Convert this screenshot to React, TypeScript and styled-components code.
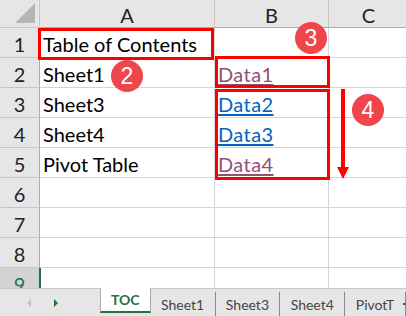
import React from "react"
import styled, { createGlobalStyle } from "styled-components"

const GlobalStyle = createGlobalStyle`
  html, body {
    margin: 0;
    padding: 0;
    background: #ffffff;
    overflow: hidden;
  }
`

const Window = styled.div`
  width: 406px;
  height: 316px;
  display: flex;
  flex-direction: column;
  font-family: Lato, "Liberation Sans", sans-serif;
  overflow: hidden;
`

const SheetArea = styled.div`
  position: relative;
  height: 288px;
  overflow: hidden;
`

const Grid = styled.div`
  display: grid;
  grid-template-columns: 40px 175px 114px 80px;
  grid-template-rows: 28px repeat(9, 30px);
`

const Corner = styled.div`
  position: relative;
  background: #e6e6e6;
  border-right: 1px solid #c6c6c6;
  border-bottom: 1px solid #c6c6c6;
  &::after {
    content: "";
    position: absolute;
    right: 4px;
    bottom: 4px;
    width: 0;
    height: 0;
    border-left: 20px solid transparent;
    border-bottom: 20px solid #b5b5b5;
  }
`

const ColHead = styled.div`
  background: #e6e6e6;
  border-right: 1px solid #c6c6c6;
  border-bottom: 1px solid #ababab;
  display: flex;
  align-items: center;
  justify-content: center;
  font-size: 20px;
  color: #222;
  padding-top: 2px;
`

const RowHead = styled.div<{ $active?: boolean }>`
  background: ${(p) => (p.$active ? "#d3d3d3" : "#e6e6e6")};
  color: ${(p) => (p.$active ? "#217346" : "#222")};
  border-right: 1px solid #ababab;
  border-bottom: 1px solid #c6c6c6;
  display: flex;
  align-items: center;
  justify-content: center;
  font-size: 20px;
  padding-top: 2px;
`

const Cell = styled.div<{ $selected?: boolean }>`
  border-right: 1px solid #d4d4d4;
  border-bottom: 1px solid #d4d4d4;
  border-left: ${(p) => (p.$selected ? "2px solid #217346" : "none")};
  margin-left: ${(p) => (p.$selected ? "-1px" : "0")};
  display: flex;
  align-items: center;
  padding: 2px 0 0 3px;
  font-size: 20px;
  color: #000;
  white-space: nowrap;
  overflow: visible;
`

const Link = styled.span<{ $visited?: boolean }>`
  color: ${(p) => (p.$visited ? "#954f72" : "#0563c1")};
  text-decoration: underline;
  text-underline-offset: 2px;
  letter-spacing: 0.4px;
`

const RedBox = styled.div<{ $x: number; $y: number; $w: number; $h: number }>`
  position: absolute;
  left: ${(p) => p.$x}px;
  top: ${(p) => p.$y}px;
  width: ${(p) => p.$w}px;
  height: ${(p) => p.$h}px;
  box-sizing: border-box;
  border: 3px solid #ff0000;
  pointer-events: none;
`

const Badge = styled.div<{ $x: number; $y: number }>`
  position: absolute;
  left: ${(p) => p.$x}px;
  top: ${(p) => p.$y}px;
  width: 32px;
  height: 32px;
  border-radius: 50%;
  background: #f0454b;
  color: #fff;
  display: flex;
  align-items: center;
  justify-content: center;
  font-family: "Liberation Sans", Arial, sans-serif;
  font-size: 23px;
`

const Arrow = styled.svg`
  position: absolute;
  left: 336px;
  top: 89px;
`

const TabBar = styled.div`
  position: relative;
  height: 28px;
  background: #e6e6e6;
  border-top: 1px solid #c6c6c6;
  box-sizing: border-box;
  display: flex;
  align-items: flex-start;
`

const NavArea = styled.div`
  width: 100px;
  height: 100%;
  display: flex;
  align-items: center;
  padding-left: 27px;
  box-sizing: border-box;
  gap: 23px;
`

const NavArrow = styled.div<{ $dir: "left" | "right"; $on?: boolean }>`
  width: 0;
  height: 0;
  border-top: 4px solid transparent;
  border-bottom: 4px solid transparent;
  ${(p) =>
    p.$dir === "left"
      ? `border-right: 4px solid ${p.$on ? "#217346" : "#c3c3c3"};`
      : `border-left: 4px solid ${p.$on ? "#217346" : "#c3c3c3"};`}
`

const Tab = styled.div<{ $active?: boolean; $w: number }>`
  width: ${(p) => p.$w}px;
  box-sizing: border-box;
  display: flex;
  align-items: center;
  justify-content: center;
  font-size: 14px;
  ${(p) =>
    p.$active
      ? `
    margin-top: -1px;
    height: 25px;
    background: #ffffff;
    border-left: 1px solid #ababab;
    border-right: 1px solid #ababab;
    border-bottom: 2px solid #217346;
    color: #217346;
    font-weight: 700;
  `
      : `
    height: 24px;
    margin-top: 3px;
    color: #444;
    border-right: 1px solid #8a8a8a;
    &:last-of-type { border-right: none; justify-content: flex-start; padding-left: 20px; }
  `}
`

const Dots = styled.div`
  position: absolute;
  right: 0;
  top: 14px;
  width: 3px;
  height: 2px;
  background: #217346;
`

const rows: { a: string; b?: string; visited?: boolean }[] = [
  { a: "Table of Contents" },
  { a: "Sheet1", b: "Data1", visited: true },
  { a: "Sheet3", b: "Data2" },
  { a: "Sheet4", b: "Data3" },
  { a: "Pivot Table", b: "Data4", visited: true },
  { a: "" },
  { a: "" },
  { a: "" },
  { a: "" },
]

export default function App() {
  return (
    <>
      <GlobalStyle />
      <Window>
        <SheetArea>
          <Grid>
            <Corner />
            <ColHead>A</ColHead>
            <ColHead>B</ColHead>
            <ColHead>C</ColHead>
            {rows.map((r, i) => (
              <React.Fragment key={i}>
                <RowHead $active={i === 8}>{i + 1}</RowHead>
                <Cell $selected={i === 8}>{r.a}</Cell>
                <Cell>{r.b && <Link $visited={r.visited}>{r.b}</Link>}</Cell>
                <Cell />
              </React.Fragment>
            ))}
          </Grid>

          <RedBox $x={38} $y={28} $w={176} $h={32} />
          <RedBox $x={215} $y={56} $w={115} $h={32} />
          <RedBox $x={215} $y={89} $w={115} $h={91} />

          <Arrow width="14" height="91" viewBox="0 0 14 91">
            <rect x="5" y="0" width="4" height="79" fill="#ff0000" />
            <polygon points="1,78 13,78 7,90" fill="#ff0000" />
          </Arrow>

          <Badge $x={111} $y={60}>2</Badge>
          <Badge $x={295} $y={22}>3</Badge>
          <Badge $x={352} $y={94}>4</Badge>
        </SheetArea>

        <TabBar>
          <NavArea>
            <NavArrow $dir="left" />
            <NavArrow $dir="right" $on />
          </NavArea>
          <Tab $active $w={51}>TOC</Tab>
          <Tab $w={65}>Sheet1</Tab>
          <Tab $w={65}>Sheet3</Tab>
          <Tab $w={65}>Sheet4</Tab>
          <Tab $w={61}>PivotT</Tab>
          <Dots />
        </TabBar>
      </Window>
    </>
  )
}
